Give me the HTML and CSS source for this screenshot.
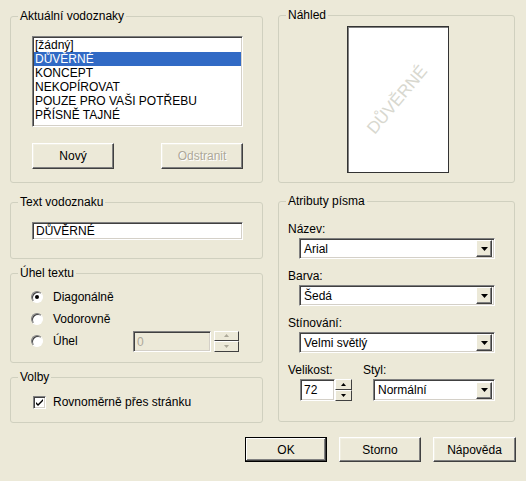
FILE: index.html
```html
<!DOCTYPE html>
<html lang="cs">
<head>
  <meta charset="UTF-8">
  <title>Vodoznaky</title>
  <link rel="stylesheet" href="styles.css">
</head>
<body>
  <div class="dialog">
    <div class="columns">
      <div class="col col-left">
        <fieldset class="group g-current">
          <legend>Aktuální vodoznaky</legend>
          <div class="body">
            <ul class="listbox">
              <li>[žádný]</li>
              <li class="selected">DŮVĚRNÉ</li>
              <li>KONCEPT</li>
              <li>NEKOPÍROVAT</li>
              <li>POUZE PRO VAŠI POTŘEBU</li>
              <li>PŘÍSNĚ TAJNÉ</li>
            </ul>
            <div class="btn-row">
              <button class="btn btn-small">Nový</button>
              <button class="btn btn-small" disabled>Odstranit</button>
            </div>
          </div>
        </fieldset>

        <fieldset class="group g-text">
          <legend>Text vodoznaku</legend>
          <div class="body">
            <div class="field text-field">DŮVĚRNÉ</div>
          </div>
        </fieldset>

        <fieldset class="group g-angle">
          <legend>Úhel textu</legend>
          <div class="body">
            <div class="radio-row">
              <span class="radio checked"></span><span>Diagonálně</span>
            </div>
            <div class="radio-row">
              <span class="radio"></span><span>Vodorovně</span>
            </div>
            <div class="radio-row">
              <div class="radio-label"><span class="radio"></span><span>Úhel</span></div>
              <div class="field angle-field">0</div>
              <div class="spin spin-disabled">
                <span class="spin-btn"><svg width="5" height="3"><path d="M0 3h5L2.5 0z"/></svg></span>
                <span class="spin-btn"><svg width="5" height="3"><path d="M0 0h5L2.5 3z"/></svg></span>
              </div>
            </div>
          </div>
        </fieldset>

        <fieldset class="group g-options">
          <legend>Volby</legend>
          <div class="body">
            <div class="check-row">
              <span class="checkbox"><svg width="9" height="9"><path d="M1 4l2 2 5-5v2l-5 5-2-2z"/></svg></span>
              <span>Rovnoměrně přes stránku</span>
            </div>
          </div>
        </fieldset>
      </div>

      <div class="col col-right">
        <fieldset class="group g-preview">
          <legend>Náhled</legend>
          <div class="body">
            <div class="paper"><span class="wm">DŮVĚRNÉ</span></div>
          </div>
        </fieldset>

        <fieldset class="group g-font">
          <legend>Atributy písma</legend>
          <div class="body">
            <div class="label">Název:</div>
            <div class="combo"><span class="combo-text">Arial</span><span class="combo-btn"><svg width="7" height="4"><path d="M0 0h7L3.5 4z"/></svg></span></div>
            <div class="label">Barva:</div>
            <div class="combo"><span class="combo-text">Šedá</span><span class="combo-btn"><svg width="7" height="4"><path d="M0 0h7L3.5 4z"/></svg></span></div>
            <div class="label">Stínování:</div>
            <div class="combo"><span class="combo-text">Velmi světlý</span><span class="combo-btn"><svg width="7" height="4"><path d="M0 0h7L3.5 4z"/></svg></span></div>
            <div class="size-row">
              <div class="size-col">
                <div class="label">Velikost:</div>
                <div class="num-wrap">
                  <div class="field num-field">72</div>
                  <div class="spin">
                    <span class="spin-btn"><svg width="5" height="3"><path d="M0 3h5L2.5 0z"/></svg></span>
                    <span class="spin-btn"><svg width="5" height="3"><path d="M0 0h5L2.5 3z"/></svg></span>
                  </div>
                </div>
              </div>
              <div class="style-col">
                <div class="label">Styl:</div>
                <div class="combo combo-style"><span class="combo-text">Normální</span><span class="combo-btn"><svg width="7" height="4"><path d="M0 0h7L3.5 4z"/></svg></span></div>
              </div>
            </div>
          </div>
        </fieldset>
      </div>
    </div>

    <div class="actions">
      <button class="btn btn-default">OK</button>
      <button class="btn">Storno</button>
      <button class="btn btn-help">Nápověda</button>
    </div>
  </div>
</body>
</html>
```

FILE: styles.css
```css
body {
  margin: 0;
  background: #ece9d8;
  font-family: "Liberation Sans", Arial, sans-serif;
  font-size: 12px;
  color: #000;
}
.dialog {
  width: 526px;
  height: 481px;
  box-sizing: border-box;
  padding: 8px 10px 0 10px;
}
.columns {
  display: flex;
  gap: 15px;
}
.col {
  display: flex;
  flex-direction: column;
}
.col-left {
  width: 253px;
}
.col-right {
  width: 237px;
}

/* group boxes */
.group {
  margin: 0;
  padding: 0;
  min-width: 0;
  box-sizing: border-box;
  border: 1px solid #d0d0bf;
  border-radius: 3px;
}
.group legend {
  margin-left: 7px;
  padding: 0 2px;
  line-height: 14px;
}
.g-current {
  margin-top: 1px;
  height: 174px;
}
.g-current .body {
  padding: 13px 19px 0 21px;
}
.g-text {
  margin-top: 12px;
  height: 64px;
}
.g-text .body {
  padding: 13px 0 0 21px;
}
.g-angle {
  margin-top: 7px;
  height: 97px;
}
.g-angle .body {
  padding: 6px 0 0 20px;
}
.g-options {
  margin-top: 7px;
  height: 53px;
}
.g-options .body {
  padding: 11px 0 0 22px;
}
.g-preview {
  height: 175px;
}
.g-preview .body {
  padding: 4px 0 0 68px;
}
.g-font {
  margin-top: 11px;
  height: 228px;
}
.g-font .body {
  padding: 14px 0 0 9px;
}

/* sunken controls */
.listbox,
.field,
.combo {
  box-sizing: border-box;
  background: #fff;
  border: 1px solid;
  border-color: #808080 #fff #fff #808080;
  box-shadow: inset 1px 1px 0 #404040, inset -1px -1px 0 #d4d0c8;
}
.listbox {
  list-style: none;
  margin: 0;
  padding: 1px;
  width: 211px;
  height: 91px;
}
.listbox li {
  line-height: 14px;
  padding-left: 1px;
}
.listbox .selected {
  background: #316ac5;
  color: #fff;
}
.field {
  line-height: 14px;
  padding: 2px 3px;
}
.text-field {
  width: 211px;
  height: 18px;
  padding-top: 1px;
}
.angle-field {
  width: 78px;
  height: 21px;
  background: #ece9d8;
  color: #aca899;
  padding-top: 3px;
}
.num-field {
  width: 35px;
  height: 22px;
  padding-top: 3px;
}

/* buttons */
.btn {
  box-sizing: border-box;
  width: 82px;
  height: 25px;
  padding: 0;
  font: inherit;
  color: #000;
  background: #ece9d8;
  border: 1px solid;
  border-color: #fff #404040 #404040 #fff;
  box-shadow: inset -1px -1px 0 #808080, inset 1px 1px 0 #f1efe2;
  cursor: pointer;
}
.btn:disabled {
  color: #aca899;
  text-shadow: 1px 1px 0 #fff;
}
.btn-small {
  height: 26px;
}
.btn-default {
  border: 1px solid #000;
  box-shadow: inset -1px -1px 0 #404040, inset 1px 1px 0 #fff, inset -2px -2px 0 #808080;
}
.btn-help {
  width: 83px;
}
.btn-row {
  display: flex;
  justify-content: space-between;
  margin-top: 16px;
}
.actions {
  display: flex;
  justify-content: flex-end;
  gap: 12px;
  margin-top: 14px;
}

/* radios and checkbox */
.radio-row {
  display: flex;
  align-items: center;
  height: 22px;
}
.radio-label {
  display: flex;
  align-items: center;
  width: 102px;
}
.radio {
  position: relative;
  box-sizing: border-box;
  width: 12px;
  height: 12px;
  margin-right: 10px;
  border-radius: 50%;
  background: #fff;
  border: 1px solid;
  border-color: #808080 #fff #fff #808080;
  box-shadow: inset 1px 1px 0 #404040;
}
.radio.checked::after {
  content: "";
  position: absolute;
  left: 3px;
  top: 3px;
  width: 4px;
  height: 4px;
  border-radius: 50%;
  background: #000;
}
.check-row {
  display: flex;
  align-items: center;
}
.checkbox {
  box-sizing: border-box;
  display: flex;
  align-items: center;
  justify-content: center;
  width: 13px;
  height: 13px;
  margin-right: 7px;
  background: #fff;
  border: 1px solid;
  border-color: #808080 #fff #fff #808080;
  box-shadow: inset 1px 1px 0 #404040, inset -1px -1px 0 #d4d0c8;
}

/* spin buttons */
.spin {
  display: flex;
  flex-direction: column;
  width: 17px;
  height: 22px;
}
.spin-disabled {
  width: 25px;
  height: 21px;
  margin-left: 3px;
}
.spin-btn {
  flex: 1;
  display: flex;
  align-items: center;
  justify-content: center;
  box-sizing: border-box;
  background: #ece9d8;
  border: 1px solid;
  border-color: #fff #404040 #404040 #fff;
}
.spin-disabled .spin-btn svg {
  fill: #aca899;
}

/* combos */
.label {
  line-height: 14px;
}
.combo {
  display: flex;
  align-items: center;
  justify-content: space-between;
  width: 196px;
  height: 21px;
  margin: 2px 0 10px 11px;
  padding: 2px;
}
.combo-text {
  padding-left: 2px;
}
.combo-btn {
  box-sizing: border-box;
  display: flex;
  align-items: center;
  justify-content: center;
  width: 16px;
  height: 17px;
  background: #ece9d8;
  border: 1px solid;
  border-color: #fff #404040 #404040 #fff;
  box-shadow: inset -1px -1px 0 #808080;
}
.size-row {
  display: flex;
}
.size-col {
  width: 75px;
}
.num-wrap {
  display: flex;
  margin: 2px 0 0 12px;
}
.combo-style {
  width: 122px;
  height: 22px;
  margin: 2px 0 0 10px;
}

/* preview */
.paper {
  box-sizing: border-box;
  width: 102px;
  height: 147px;
  display: flex;
  align-items: center;
  justify-content: center;
  overflow: hidden;
  background: #fff;
  border: 1px solid #333;
  box-shadow: inset 1px 1px 0 #808080;
}
.wm {
  transform: rotate(-50deg);
  font-size: 17px;
  color: #d8d8cf;
  white-space: nowrap;
}
```
